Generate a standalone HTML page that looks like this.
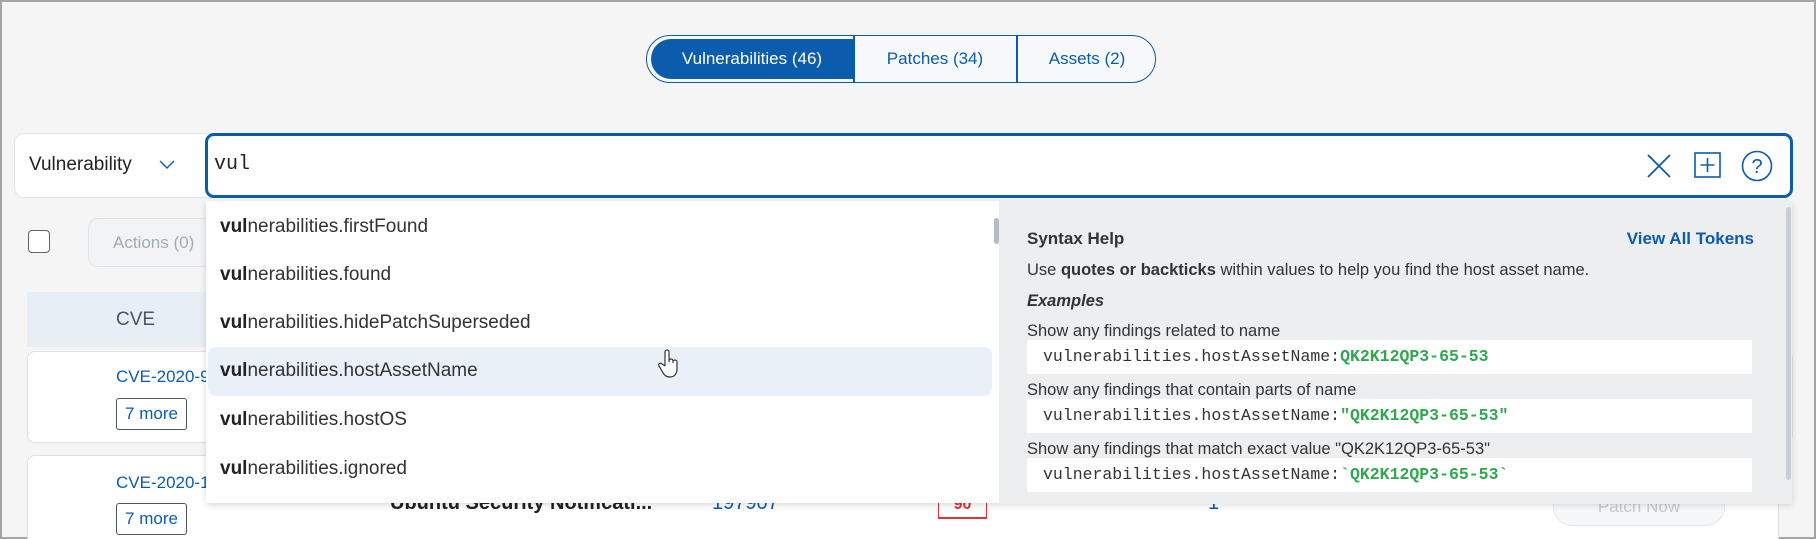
<!DOCTYPE html>
<html><head><meta charset="utf-8">
<style>
*{box-sizing:border-box;margin:0;padding:0}
html,body{width:1816px;height:539px;overflow:hidden}
body{background:#f5f5f5;font-family:"Liberation Sans",Arial,sans-serif;position:relative;border:2px solid #a4a4a4}
.a{position:absolute}
.blue{color:#0b5cad}
.mono{font-family:"Liberation Mono",monospace}
.item{position:absolute;left:14px;font-size:19px;color:#333;line-height:24px}
.item b{color:#222}
.code{position:absolute;left:1025px;width:725px;height:34px;background:#fff;font-family:"Liberation Mono",monospace;font-size:16.5px;color:#333;padding-left:16px;line-height:34px;white-space:pre}
.code span{color:#2fa84f;font-weight:bold}
.t{position:absolute;left:1025px;font-size:16.5px;color:#333;line-height:20px;white-space:nowrap}
</style></head><body>

<!-- tabs -->
<div class="a" style="left:644px;top:33px;width:510px;height:48px;border:1.5px solid #0b5cad;border-radius:24px;background:#f7f8fa"></div>
<div class="a" style="left:649px;top:37px;width:202px;height:40px;background:#0b5cad;border-radius:20px 0 0 20px;color:#fff;font-size:17px;line-height:40px;text-align:center">Vulnerabilities (46)</div>
<div class="a" style="left:851px;top:33px;width:1.5px;height:48px;background:#0b5cad"></div>
<div class="a" style="left:1014px;top:33px;width:1.5px;height:48px;background:#0b5cad"></div>
<div class="a blue" style="left:852px;top:37px;width:162px;line-height:40px;text-align:center;font-size:17px">Patches (34)</div>
<div class="a blue" style="left:1015px;top:37px;width:140px;line-height:40px;text-align:center;font-size:17px">Assets (2)</div>

<!-- background table -->
<div class="a" style="left:26px;top:228px;width:22px;height:23px;border:1.5px solid #5a6572;border-radius:4px;background:#fff"></div>
<div class="a" style="left:86px;top:216px;width:140px;height:49px;border:1px solid #dfe3e7;border-radius:10px;background:#f1f3f5;color:#a3abb4;font-size:17px;line-height:47px;padding-left:24px">Actions (0)</div>
<div class="a" style="left:25px;top:290px;width:200px;height:55px;background:#e8eef6;color:#4a5561;font-size:19px;line-height:55px;padding-left:89px">CVE</div>
<div class="a" style="left:25px;top:349px;width:1766px;height:92px;background:#fff;border:1px solid #dde1e6;border-radius:8px"></div>
<div class="a blue" style="left:114px;top:365px;font-size:17px">CVE-2020-9</div>
<div class="a blue" style="left:114px;top:396px;width:71px;height:32px;border:1px solid #4a5561;border-radius:3px;font-size:17px;line-height:30px;text-align:center">7 more</div>
<div class="a" style="left:25px;top:453px;width:1752px;height:100px;background:#fff;border:1px solid #dde1e6;border-radius:8px"></div>
<div class="a blue" style="left:114px;top:471px;font-size:17px">CVE-2020-1</div>
<div class="a blue" style="left:114px;top:501px;width:71px;height:32px;border:1px solid #4a5561;border-radius:3px;font-size:17px;line-height:30px;text-align:center">7 more</div>
<div class="a" style="left:388px;top:490px;font-size:20px;font-weight:bold;color:#222">Ubuntu Security Notificati...</div>
<div class="a blue" style="left:710px;top:490px;font-size:20px">197907</div>
<div class="a" style="left:936px;top:489px;width:49px;height:28px;border:1px solid #d33;border-bottom:2px solid #d33;color:#d33;font-weight:bold;text-align:center;font-size:16px;line-height:26px">90</div>
<div class="a blue" style="left:1206px;top:490px;font-size:20px">1</div>
<div class="a" style="left:1551px;top:485px;width:172px;height:39px;border:1px solid #e3e6ea;border-radius:20px;background:#f6f7f8;color:#c4c9cf;text-align:center;line-height:37px;font-size:17px">Patch Now</div>

<!-- search -->
<div class="a" style="left:12px;top:131px;width:200px;height:65px;background:#fff;border:1px solid #e3e6ea;border-radius:10px 0 0 10px"></div>
<div class="a" style="left:27px;top:152px;font-size:19px;color:#222">Vulnerability</div>
<svg class="a" style="left:157px;top:158px" width="16" height="10" viewBox="0 0 16 10"><path d="M1 1 L8 8 L15 1" fill="none" stroke="#0b5cad" stroke-width="1.4"/></svg>
<div class="a" style="left:203px;top:131px;width:1588px;height:65px;background:#fff;border:3px solid #0b5cad;border-radius:9px"></div>
<div class="a mono" style="left:212px;top:151px;font-size:20px;color:#222">vul</div>
<svg class="a" style="left:1645px;top:152px" width="24" height="24" viewBox="0 0 24 24"><path d="M1 1 L23 23 M23 1 L1 23" stroke="#0b5cad" stroke-width="1.8"/></svg>
<svg class="a" style="left:1692px;top:150px" width="28" height="26" viewBox="0 0 28 26"><rect x="1" y="1" width="25" height="24" fill="none" stroke="#0b5cad" stroke-width="1.6"/><path d="M13.5 6 V20 M6.5 13 H20.5" stroke="#0b5cad" stroke-width="1.6"/></svg>
<svg class="a" style="left:1739px;top:148px" width="32" height="32" viewBox="0 0 32 32"><circle cx="16" cy="16" r="14.5" fill="none" stroke="#0b5cad" stroke-width="1.6"/><text x="16" y="23" text-anchor="middle" font-family="Liberation Sans" font-size="20" fill="#0b5cad">?</text></svg>

<!-- dropdown -->
<div class="a" style="left:204px;top:199px;width:1586px;height:302px;box-shadow:0 2px 6px rgba(0,0,0,.15)"></div>
<div class="a" style="left:204px;top:199px;width:793px;height:302px;background:#fff">
  <div class="a" style="left:2px;top:146px;width:784px;height:49px;background:#e9f0f8;border-radius:8px"></div>
  <div class="a" style="left:788px;top:17px;width:5px;height:26px;background:#b5bcc4;border-radius:3px"></div>
  <div class="item" style="top:14px"><b>vul</b>nerabilities.firstFound</div>
  <div class="item" style="top:62px"><b>vul</b>nerabilities.found</div>
  <div class="item" style="top:110px"><b>vul</b>nerabilities.hidePatchSuperseded</div>
  <div class="item" style="top:158px"><b>vul</b>nerabilities.hostAssetName</div>
  <div class="item" style="top:207px"><b>vul</b>nerabilities.hostOS</div>
  <div class="item" style="top:256px"><b>vul</b>nerabilities.ignored</div>
  <svg class="a" style="left:452px;top:148px" width="22" height="30" viewBox="0 0 22 30"><path d="M7 17 V3 a2 2 0 0 1 4 0 V13 M11 12 a2 2 0 0 1 4 0 V14 M15 13 a2 2 0 0 1 4 0 V20 c0 5 -3 8 -7 8 c-4 0 -6 -2 -8 -6 l-3 -5 a1.8 1.8 0 0 1 3 -2 L7 17" fill="#fff" stroke="#333" stroke-width="1.2"/></svg>
</div>
<div class="a" style="left:997px;top:199px;width:793px;height:303px;background:#eceef0"></div>
<div class="a" style="left:1784px;top:205px;width:5px;height:273px;background:#c9ced4;border-radius:3px"></div>
<div class="a" style="left:1025px;top:227px;font-size:17px;font-weight:bold;color:#333">Syntax Help</div>
<div class="a blue" style="left:1500px;width:252px;text-align:right;top:227px;font-size:17px;font-weight:bold">View All Tokens</div>
<div class="t" style="top:258px">Use <b>quotes or backticks</b> within values to help you find the host asset name.</div>
<div class="t" style="top:289px;font-weight:bold;font-style:italic">Examples</div>
<div class="t" style="top:319px">Show any findings related to name</div>
<div class="code" style="top:338px">vulnerabilities.hostAssetName:<span>QK2K12QP3-65-53</span></div>
<div class="t" style="top:378px">Show any findings that contain parts of name</div>
<div class="code" style="top:397px">vulnerabilities.hostAssetName:<span>"QK2K12QP3-65-53"</span></div>
<div class="t" style="top:437px">Show any findings that match exact value "QK2K12QP3-65-53"</div>
<div class="code" style="top:456px">vulnerabilities.hostAssetName:<span>`QK2K12QP3-65-53`</span></div>

</body></html>
